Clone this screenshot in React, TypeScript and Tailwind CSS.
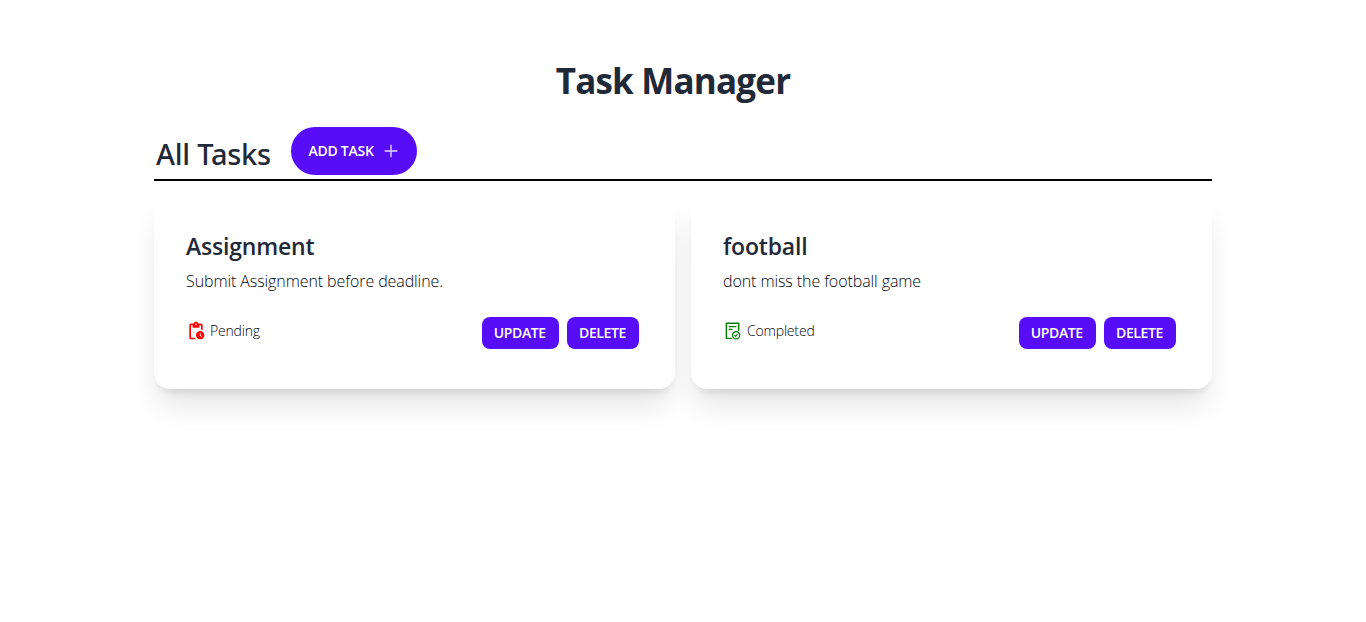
import { AiOutlineFileDone, AiOutlinePlus } from "react-icons/ai";
import { MdOutlinePendingActions } from "react-icons/md";

type Task = { title: string; description: string; completed: boolean };

const tasks: Task[] = [
  { title: "Assignment", description: "Submit Assignment before deadline.", completed: false },
  { title: "football", description: "dont miss the football game", completed: true },
];

function TaskCard({ title, description, completed }: Task) {
  return (
    <article className="h-48 rounded-2xl bg-white px-8 pt-8 shadow-[0_20px_30px_-5px_rgb(0_0_0/0.11),0_8px_10px_-6px_rgb(0_0_0/0.12)]">
      <h3 className="mt-px text-[23px] leading-8 font-semibold tracking-[-0.2px]">{title}</h3>
      <p className="mt-[7px] text-[16px] leading-6 font-light tracking-[-0.09px] text-[#030712]">{description}</p>
      <div className="mt-6 flex items-start justify-between pr-1">
        <div className="flex h-7 items-center gap-1 text-[14px] font-light tracking-[-0.18px] text-[#030712]">
          {completed ? (
            <AiOutlineFileDone className="size-5 text-[green]" />
          ) : (
            <MdOutlinePendingActions className="size-5 text-[red]" />
          )}
          <span className="pb-px">{completed ? "Completed" : "Pending"}</span>
        </div>
        <div className="flex gap-2 text-[14px] font-semibold tracking-[-0.4px] text-white">
          <button className="h-8 w-[77.5px] rounded-lg bg-[#570df8] pr-px pb-px">UPDATE</button>
          <button className="h-8 w-[72px] rounded-lg bg-[#570df8] pr-px pb-px">DELETE</button>
        </div>
      </div>
    </article>
  );
}

export default function App() {
  return (
    <main className="min-h-screen bg-white pt-14 font-['Open_Sans','Noto_Sans',sans-serif] text-[#1f2937]">
      <h1 className="mr-5 text-center text-[35px] leading-[50px] font-bold tracking-[-0.8px]">Task Manager</h1>
      <section className="mx-auto w-[1058px]">
        <header className="mt-[21px] flex h-[54px] items-start border-b-2 border-black pl-0.5">
          <h2 className="mt-[7px] w-[135px] font-['Noto_Sans','Open_Sans',sans-serif] text-[29px] leading-10 font-medium tracking-[-0.25px] whitespace-nowrap">
            All Tasks
          </h2>
          <button className="flex h-12 w-[126px] items-center gap-2 rounded-full bg-[#570df8] pl-[17px] text-[14px] font-semibold tracking-[-0.25px] whitespace-nowrap text-white">
            <span className="w-[66px] pb-px">ADD TASK</span>
            <AiOutlinePlus className="size-[18px] opacity-85" />
          </button>
        </header>
        <div className="mt-4 grid grid-cols-2 gap-4">
          {tasks.map((task) => (
            <TaskCard key={task.title} {...task} />
          ))}
        </div>
      </section>
    </main>
  );
}
